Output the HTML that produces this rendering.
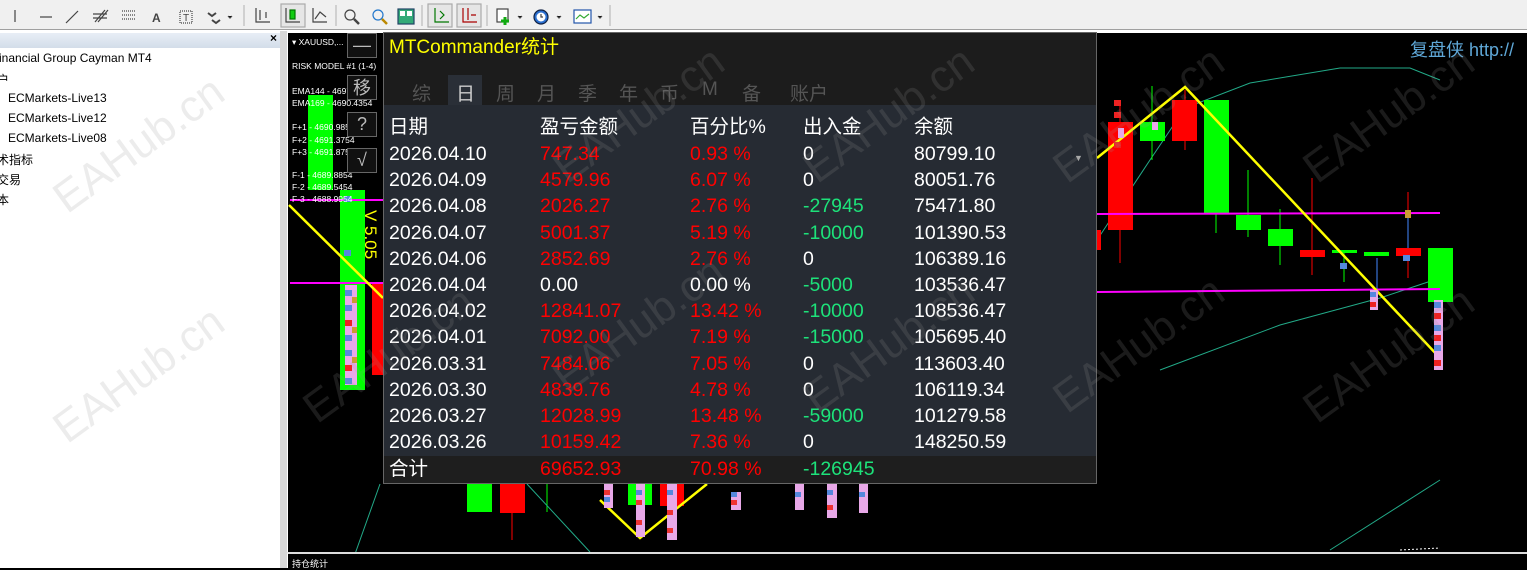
<!DOCTYPE html>
<html><head><meta charset="utf-8"><style>
*{margin:0;padding:0;box-sizing:border-box}
body{width:1527px;height:568px;overflow:hidden;background:#000;position:relative;font-family:"Liberation Sans","Noto Sans CJK SC",sans-serif}
.abs{position:absolute}
#tb{left:0;top:0;width:1527px;height:30px;background:#f0f0f0;border-bottom:1px solid #a0a0a0}
#lp{left:0;top:31px;width:284px;height:537px;background:#fff}
#lp .hd{position:absolute;left:0;top:2px;width:280px;height:15px;background:linear-gradient(#e8eef6,#d3dde9)}
#lp .t{position:absolute;font:12px "Liberation Sans","Noto Sans CJK SC",sans-serif;color:#000;white-space:nowrap}
#chart{left:287px;top:32px;width:1240px;height:521px;background:#000;border-top:1px solid #fff;border-left:1px solid #fff}
#bot{left:287px;top:552px;width:1240px;height:16px;background:#000;border-top:2px solid #ddd;border-left:1px solid #fff}
#pan{left:383px;top:32px;width:714px;height:452px;background:#1c1c1c;border:1px solid #666}
#pan .tbl{position:absolute;left:0;top:72px;width:712px;height:351px;background:#262b33}
#pan .tot{position:absolute;left:0;top:423px;width:712px;height:27px;background:#1e1e1e}
.c{position:absolute;font-size:19.5px;white-space:nowrap;line-height:22px}
.w{color:#fff}.r{color:#f00}.g{color:#1de27a}
.tab{position:absolute;top:46px;font-size:19px;color:#555}
.btn{position:absolute;left:347px;width:30px;height:25px;border:1px solid #666;background:#111;color:#bbb;font-size:18px;text-align:center;line-height:23px}
.wm{position:absolute;font:44px "Liberation Sans",sans-serif;color:rgba(150,150,150,.18);transform:rotate(-36deg);white-space:nowrap}
.lbl{position:absolute;left:292px;font-size:8.5px;color:#fff;white-space:nowrap}
</style></head><body>
<div id="tb" class="abs">
<svg width="620" height="30" style="position:absolute;left:0;top:0" stroke="#444" fill="none" stroke-width="1.2">
<line x1="15" y1="10" x2="15" y2="22"/><line x1="40" y1="17" x2="52" y2="17"/><line x1="66" y1="23" x2="78" y2="11"/>
<path d="M95 22l10-12M98 22l10-12M93 14h14M93 18h14"/><path d="M122 11h14M122 15h14M122 19h14" stroke-dasharray="1 1"/>
<text x="152" y="22" font-size="12" fill="#444" stroke="none" font-weight="bold">A</text><rect x="180" y="11" width="12" height="12" stroke-dasharray="1 1"/><text x="183" y="21" font-size="10" fill="#444" stroke="none">T</text>
<path d="M208 13l4 3 4-3M212 20l4 3 4-3" stroke-width="2"/><path d="M228 16l2 2 2-2" fill="#000"/>
<line x1="244" y1="5" x2="244" y2="26" stroke="#bbb"/>
<path d="M256 8v14h14M260 10v10M266 12v6" /><rect x="281" y="4" width="24" height="23" stroke="#aaa" fill="#e6e6e6"/><path d="M286 8v14h14"/><rect x="290" y="10" width="5" height="9" fill="#1c1" stroke="#070"/><path d="M313 8v14h14M315 19l5-7 6 5"/>
<line x1="336" y1="5" x2="336" y2="26" stroke="#bbb"/>
<circle cx="350" cy="15" r="5"/><line x1="354" y1="19" x2="359" y2="24" stroke-width="2.5"/><circle cx="378" cy="15" r="5" stroke="#27c"/><line x1="382" y1="19" x2="387" y2="24" stroke="#b80" stroke-width="2.5"/>
<rect x="398" y="9" width="16" height="15" fill="#3a7" stroke="#246"/><rect x="400" y="11" width="5" height="5" fill="#fff" stroke="none"/><rect x="407" y="11" width="5" height="5" fill="#fff" stroke="none"/>
<line x1="422" y1="5" x2="422" y2="26" stroke="#bbb"/>
<rect x="428" y="4" width="24" height="23" stroke="#aaa" fill="#e6e6e6"/><path d="M435 8v14h14M440 11l4 4-4 4" stroke="#070"/>
<rect x="457" y="4" width="24" height="23" stroke="#aaa" fill="#e6e6e6"/><path d="M463 8v14h14M468 8v12M471 15h5" stroke="#a00"/>
<line x1="487" y1="5" x2="487" y2="26" stroke="#bbb"/>
<rect x="497" y="9" width="11" height="13" fill="#fff"/><path d="M505 17v8M501 21h8" stroke="#1a1" stroke-width="3"/><path d="M518 16l2 2 2-2" fill="#000"/>
<circle cx="541" cy="17" r="7" fill="#2a6fd0" stroke="#124"/><circle cx="541" cy="17" r="4.5" fill="#fff" stroke="none"/><path d="M541 14v3h2"/><path d="M557 16l2 2 2-2" fill="#000"/>
<rect x="574" y="10" width="17" height="13" fill="#fff" stroke="#25a"/><path d="M576 19l4-4 4 3 5-4" stroke="#3a3"/><path d="M598 16l2 2 2-2" fill="#000"/>
<line x1="610" y1="5" x2="610" y2="26" stroke="#bbb"/>
</svg></div>
<div class="abs" style="left:0;top:30px;width:1527px;height:2px;background:#fff"></div>

<div id="lp" class="abs"><div class="hd"></div><div class="t" style="left:270px;top:0;font-weight:bold">×</div>
<div class="t" style="left:-1px;top:20px">inancial Group Cayman MT4</div>
<div class="t" style="left:-3px;top:40px">户</div>
<div class="t" style="left:8px;top:60px">ECMarkets-Live13</div>
<div class="t" style="left:8px;top:80px">ECMarkets-Live12</div>
<div class="t" style="left:8px;top:100px">ECMarkets-Live08</div>
<div class="t" style="left:-3px;top:120px">术指标</div>
<div class="t" style="left:-3px;top:140px">交易</div>
<div class="t" style="left:-3px;top:160px">本</div>
</div>
<div class="abs" style="left:280px;top:31px;width:7px;height:537px;background:#d8d8d8"></div>

<div id="chart" class="abs"></div>
<svg class="abs" style="left:0;top:0" width="1527" height="568">
<rect x="308" y="95" width="25" height="95" fill="#0f0"/>
<rect x="340" y="190" width="25" height="200" fill="#0f0"/>
<rect x="372" y="283" width="12" height="92" fill="#f00"/>
<line x1="290" y1="200" x2="383" y2="200" stroke="#f0f" stroke-width="2"/>
<line x1="290" y1="283" x2="383" y2="283" stroke="#f0f" stroke-width="2"/>
<polyline points="289,205 383,298" stroke="#ff0" stroke-width="2.5" fill="none"/>
<g>
<rect x="345" y="285" width="12" height="100" fill="#e8a8e8"/>
<rect x="345" y="290" width="7" height="6" fill="#58d"/><rect x="345" y="305" width="7" height="6" fill="#58d"/><rect x="345" y="320" width="7" height="6" fill="#e22"/><rect x="345" y="335" width="7" height="6" fill="#58d"/><rect x="345" y="350" width="7" height="6" fill="#58d"/><rect x="345" y="365" width="7" height="6" fill="#e22"/><rect x="345" y="378" width="7" height="6" fill="#58d"/>
<rect x="352" y="297" width="5" height="6" fill="#c93"/><rect x="352" y="327" width="5" height="6" fill="#c93"/><rect x="352" y="357" width="5" height="6" fill="#c93"/>
</g>
<rect x="344" y="196" width="7" height="6" fill="#58d"/><rect x="344" y="250" width="7" height="6" fill="#58d"/>
<line x1="380" y1="484" x2="350" y2="568" stroke="#2a8" />
<rect x="467" y="484" width="25" height="28" fill="#0f0"/>
<rect x="500" y="484" width="25" height="29" fill="#f00"/><line x1="512" y1="513" x2="512" y2="540" stroke="#f00"/>
<line x1="547" y1="484" x2="547" y2="512" stroke="#0f0"/>
<line x1="527" y1="484" x2="590" y2="552" stroke="#2a8"/>
<rect x="628" y="484" width="24" height="21" fill="#0f0"/>
<rect x="660" y="484" width="24" height="22" fill="#f00"/>
<polyline points="600,500 640,538 707,484" stroke="#ff0" stroke-width="2.5" fill="none"/>
<g fill="#e8a8e8"><rect x="604" y="484" width="9" height="24"/><rect x="636" y="484" width="9" height="53"/><rect x="667" y="484" width="10" height="56"/><rect x="731" y="492" width="10" height="18"/><rect x="795" y="484" width="9" height="26"/><rect x="827" y="484" width="10" height="34"/><rect x="859" y="484" width="9" height="29"/></g>
<g fill="#e33"><rect x="604" y="490" width="6" height="5"/><rect x="636" y="500" width="6" height="5"/><rect x="667" y="510" width="6" height="5"/><rect x="731" y="500" width="6" height="5"/><rect x="827" y="505" width="6" height="5"/><rect x="636" y="520" width="6" height="5"/><rect x="667" y="528" width="6" height="5"/></g>
<g fill="#58d"><rect x="604" y="497" width="6" height="5"/><rect x="636" y="490" width="6" height="5"/><rect x="667" y="490" width="6" height="5"/><rect x="795" y="492" width="6" height="5"/><rect x="859" y="492" width="6" height="5"/><rect x="827" y="490" width="6" height="5"/><rect x="731" y="492" width="6" height="5"/></g>
<line x1="1330" y1="550" x2="1440" y2="480" stroke="#2a8"/>
<line x1="1400" y1="550" x2="1440" y2="548" stroke="#fff" stroke-dasharray="2 2"/>
<polyline points="1097,240 1150,160 1185,108 1250,83 1340,68 1410,68 1440,80" stroke="#2a8" fill="none"/>
<polyline points="1160,370 1280,325 1380,298 1440,278" stroke="#2a8" fill="none"/>
<rect x="1097" y="230" width="4" height="20" fill="#f00"/>
<line x1="1120" y1="100" x2="1120" y2="263" stroke="#f00"/><rect x="1108" y="122" width="25" height="108" fill="#f00"/>
<line x1="1152" y1="86" x2="1152" y2="160" stroke="#0f0"/><rect x="1140" y="122" width="25" height="19" fill="#0f0"/>
<line x1="1185" y1="90" x2="1185" y2="150" stroke="#f00"/><rect x="1172" y="100" width="25" height="41" fill="#f00"/>
<rect x="1204" y="100" width="25" height="114" fill="#0f0"/><line x1="1216" y1="214" x2="1216" y2="233" stroke="#0f0"/>
<line x1="1248" y1="170" x2="1248" y2="237" stroke="#0f0"/><rect x="1236" y="215" width="25" height="15" fill="#0f0"/>
<line x1="1280" y1="209" x2="1280" y2="265" stroke="#0f0"/><rect x="1268" y="229" width="25" height="17" fill="#0f0"/>
<line x1="1312" y1="178" x2="1312" y2="275" stroke="#f00"/><rect x="1300" y="250" width="25" height="7" fill="#f00"/>
<line x1="1344" y1="250" x2="1344" y2="282" stroke="#0f0"/><rect x="1332" y="250" width="25" height="3" fill="#0f0"/>
<line x1="1377" y1="258" x2="1377" y2="300" stroke="#48f"/><rect x="1364" y="252" width="25" height="4" fill="#0f0"/>
<line x1="1408" y1="192" x2="1408" y2="278" stroke="#f00"/><line x1="1408" y1="214" x2="1408" y2="260" stroke="#48f"/><rect x="1396" y="248" width="25" height="8" fill="#f00"/>
<rect x="1428" y="248" width="25" height="54" fill="#0f0"/>
<line x1="1097" y1="214" x2="1440" y2="213" stroke="#f0f" stroke-width="2"/>
<line x1="1097" y1="292" x2="1440" y2="289" stroke="#f0f" stroke-width="2"/>
<polyline points="1097,158 1185,87 1440,358" stroke="#ff0" stroke-width="2.5" fill="none"/>
<rect x="1434" y="300" width="9" height="70" fill="#e8a8e8"/>
<g fill="#58d"><rect x="1434" y="302" width="7" height="6"/><rect x="1434" y="325" width="7" height="6"/><rect x="1434" y="345" width="7" height="6"/></g>
<g fill="#e22"><rect x="1434" y="313" width="7" height="6"/><rect x="1434" y="335" width="7" height="6"/><rect x="1434" y="360" width="7" height="6"/></g>
<rect x="1370" y="290" width="8" height="20" fill="#e8a8e8"/><rect x="1370" y="292" width="6" height="5" fill="#58d"/><rect x="1370" y="302" width="6" height="5" fill="#e22"/>
<g fill="#e22"><rect x="1114" y="100" width="7" height="6"/><rect x="1114" y="112" width="7" height="6"/><rect x="1114" y="142" width="7" height="6"/></g>
<rect x="1118" y="128" width="6" height="10" fill="#e8a8e8"/><rect x="1152" y="122" width="6" height="8" fill="#e8a8e8"/>
<rect x="1405" y="210" width="6" height="8" fill="#c93"/><rect x="1403" y="255" width="7" height="6" fill="#58d"/><rect x="1340" y="263" width="7" height="6" fill="#58d"/>
</svg>

<div class="lbl" style="top:37px">▾ XAUUSD,...</div>
<div class="lbl" style="top:61px">RISK MODEL #1 (1-4)</div>
<div class="lbl" style="top:86px">EMA144 - 4697.8495</div>
<div class="lbl" style="top:98px">EMA169 - 4690.4354</div>
<div class="lbl" style="top:122px">F+1 - 4690.9854</div>
<div class="lbl" style="top:135px">F+2 - 4691.3754</div>
<div class="lbl" style="top:147px">F+3 - 4691.8754</div>
<div class="lbl" style="top:170px">F-1 - 4689.8854</div>
<div class="lbl" style="top:182px">F-2 - 4689.5454</div>
<div class="lbl" style="top:194px">F-3 - 4688.9954</div>
<div class="abs" style="top:210px;color:#ff0;font-size:17px;transform:rotate(90deg);transform-origin:0 0;left:380px;white-space:nowrap">V 5.05</div>
<div class="btn" style="top:33px">—</div>
<div class="btn" style="top:75px;font-family:'Noto Sans CJK SC',sans-serif">移</div>
<div class="btn" style="top:112px">?</div>
<div class="btn" style="top:148px">√</div>

<div class="abs" style="left:1410px;top:36px;color:#5fa8d8;font-size:18px;white-space:nowrap">复盘侠 http://</div>

<div id="pan" class="abs">
<div class="c" style="left:5px;top:4px;color:#ff0;font-size:19px">MTCommander统计</div>
<div class="abs" style="left:64px;top:42px;width:34px;height:30px;background:#2a2f37"></div>
<div class="tab" style="left:28px">综</div><div class="tab" style="left:72px;color:#ccc">日</div><div class="tab" style="left:112px">周</div><div class="tab" style="left:153px">月</div><div class="tab" style="left:194px">季</div><div class="tab" style="left:235px">年</div><div class="tab" style="left:276px">币</div><div class="tab" style="left:318px">M</div><div class="tab" style="left:358px">备</div><div class="tab" style="left:406px">账户</div>
<div class="tbl"></div><div class="tot"></div>
<div class="c w" style="left:5px;top:83px">日期</div><div class="c w" style="left:156px;top:83px">盈亏金额</div><div class="c w" style="left:306px;top:83px">百分比%</div><div class="c w" style="left:419px;top:83px">出入金</div><div class="c w" style="left:530px;top:83px">余额</div>
<div class="abs" style="left:690px;top:120px;color:#aaa;font-size:9px">▼</div>
<div style="position:absolute;left:0;top:110px">
<div class="c w" style="left:5px;top:0">2026.04.10</div><div class="c r" style="left:156px;top:0">747.34</div><div class="c r" style="left:306px;top:0">0.93 %</div><div class="c w" style="left:419px;top:0">0</div><div class="c w" style="left:530px;top:0">80799.10</div>
<div class="c w" style="left:5px;top:26.2px">2026.04.09</div><div class="c r" style="left:156px;top:26.2px">4579.96</div><div class="c r" style="left:306px;top:26.2px">6.07 %</div><div class="c w" style="left:419px;top:26.2px">0</div><div class="c w" style="left:530px;top:26.2px">80051.76</div>
<div class="c w" style="left:5px;top:52.4px">2026.04.08</div><div class="c r" style="left:156px;top:52.4px">2026.27</div><div class="c r" style="left:306px;top:52.4px">2.76 %</div><div class="c g" style="left:419px;top:52.4px">-27945</div><div class="c w" style="left:530px;top:52.4px">75471.80</div>
<div class="c w" style="left:5px;top:78.6px">2026.04.07</div><div class="c r" style="left:156px;top:78.6px">5001.37</div><div class="c r" style="left:306px;top:78.6px">5.19 %</div><div class="c g" style="left:419px;top:78.6px">-10000</div><div class="c w" style="left:530px;top:78.6px">101390.53</div>
<div class="c w" style="left:5px;top:104.8px">2026.04.06</div><div class="c r" style="left:156px;top:104.8px">2852.69</div><div class="c r" style="left:306px;top:104.8px">2.76 %</div><div class="c w" style="left:419px;top:104.8px">0</div><div class="c w" style="left:530px;top:104.8px">106389.16</div>
<div class="c w" style="left:5px;top:131px">2026.04.04</div><div class="c w" style="left:156px;top:131px">0.00</div><div class="c w" style="left:306px;top:131px">0.00 %</div><div class="c g" style="left:419px;top:131px">-5000</div><div class="c w" style="left:530px;top:131px">103536.47</div>
<div class="c w" style="left:5px;top:157.2px">2026.04.02</div><div class="c r" style="left:156px;top:157.2px">12841.07</div><div class="c r" style="left:306px;top:157.2px">13.42 %</div><div class="c g" style="left:419px;top:157.2px">-10000</div><div class="c w" style="left:530px;top:157.2px">108536.47</div>
<div class="c w" style="left:5px;top:183.4px">2026.04.01</div><div class="c r" style="left:156px;top:183.4px">7092.00</div><div class="c r" style="left:306px;top:183.4px">7.19 %</div><div class="c g" style="left:419px;top:183.4px">-15000</div><div class="c w" style="left:530px;top:183.4px">105695.40</div>
<div class="c w" style="left:5px;top:209.6px">2026.03.31</div><div class="c r" style="left:156px;top:209.6px">7484.06</div><div class="c r" style="left:306px;top:209.6px">7.05 %</div><div class="c w" style="left:419px;top:209.6px">0</div><div class="c w" style="left:530px;top:209.6px">113603.40</div>
<div class="c w" style="left:5px;top:235.8px">2026.03.30</div><div class="c r" style="left:156px;top:235.8px">4839.76</div><div class="c r" style="left:306px;top:235.8px">4.78 %</div><div class="c w" style="left:419px;top:235.8px">0</div><div class="c w" style="left:530px;top:235.8px">106119.34</div>
<div class="c w" style="left:5px;top:262px">2026.03.27</div><div class="c r" style="left:156px;top:262px">12028.99</div><div class="c r" style="left:306px;top:262px">13.48 %</div><div class="c g" style="left:419px;top:262px">-59000</div><div class="c w" style="left:530px;top:262px">101279.58</div>
<div class="c w" style="left:5px;top:288.2px">2026.03.26</div><div class="c r" style="left:156px;top:288.2px">10159.42</div><div class="c r" style="left:306px;top:288.2px">7.36 %</div><div class="c w" style="left:419px;top:288.2px">0</div><div class="c w" style="left:530px;top:288.2px">148250.59</div>
<div class="c w" style="left:5px;top:315px">合计</div><div class="c r" style="left:156px;top:315px">69652.93</div><div class="c r" style="left:306px;top:315px">70.98 %</div><div class="c g" style="left:419px;top:315px">-126945</div>
</div>
</div>

<div id="bot" class="abs"><div style="position:absolute;left:4px;top:3px;color:#fff;font-size:9px;font-family:'Noto Sans CJK SC',sans-serif">持仓统计</div></div>

<div class="wm" style="left:40px;top:120px">EAHub.cn</div>
<div class="wm" style="left:40px;top:350px">EAHub.cn</div>
<div class="wm" style="left:290px;top:330px">EAHub.cn</div>
<div class="wm" style="left:540px;top:300px">EAHub.cn</div>
<div class="wm" style="left:790px;top:320px">EAHub.cn</div>
<div class="wm" style="left:1040px;top:320px">EAHub.cn</div>
<div class="wm" style="left:1290px;top:330px">EAHub.cn</div>
<div class="wm" style="left:790px;top:90px">EAHub.cn</div>
<div class="wm" style="left:1040px;top:90px">EAHub.cn</div>
<div class="wm" style="left:1290px;top:90px">EAHub.cn</div>
<div class="wm" style="left:540px;top:90px">EAHub.cn</div>
</body></html>
